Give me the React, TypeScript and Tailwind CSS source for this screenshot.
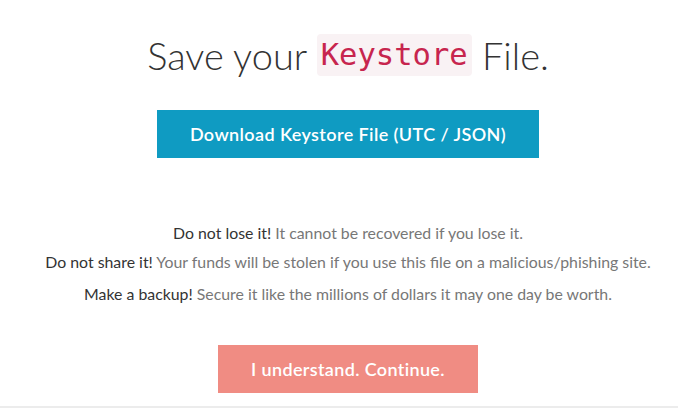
export default function App() {
  return (
    <div className="w-[678px] h-[408px] bg-white flex flex-col overflow-hidden" style={{ fontFamily: "Lato, 'Open Sans', sans-serif" }}>
      <div className="flex flex-col items-center pl-[18px]">
        <h1 className="mt-[30px] h-[50px] flex items-center text-[38px] font-light text-[#333] leading-none whitespace-nowrap">
          <span>Save your&nbsp;</span>
          <code className="bg-[#f9f2f4] text-[#c7254e] px-[4px] h-[42px] flex items-center rounded-[4px] text-[30.5px]" style={{ fontFamily: "'DejaVu Sans Mono', 'Liberation Mono', monospace" }}>Keystore</code>
          <span>&nbsp;File.</span>
        </h1>
        <button className="mt-[30px] w-[382px] h-[48px] bg-[#0f9bc2] text-white text-[18px] font-semibold tracking-[0.4px]">
          Download Keystore File (UTC / JSON)
        </button>
        <div className="mt-[64px] flex flex-col items-center text-[15.85px] text-[#777] leading-[21px] whitespace-nowrap">
          <p><span className="text-[#333]">Do not lose it!</span> It cannot be recovered if you lose it.</p>
          <p className="mt-[8px]"><span className="text-[#333]">Do not share it!</span> Your funds will be stolen if you use this file on a malicious/phishing site.</p>
          <p className="mt-[11px]"><span className="text-[#333]">Make a backup!</span> Secure it like the millions of dollars it may one day be worth.</p>
        </div>
        <button className="mt-[41px] w-[260px] h-[48px] bg-[#f08c83] text-white text-[18px] font-semibold tracking-[0.35px]">
          I understand. Continue.
        </button>
      </div>
      <div className="mt-auto w-full h-[2px] bg-[#ececec]"></div>
    </div>
  );
}
